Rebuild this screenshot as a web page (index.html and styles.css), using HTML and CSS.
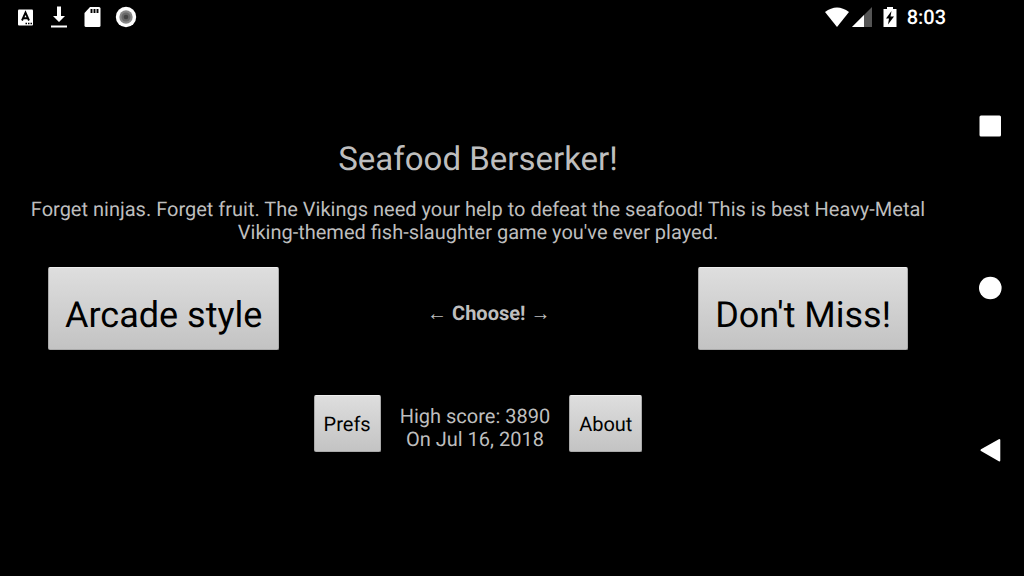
FILE: index.html
```html
<!DOCTYPE html>
<html lang="en">
<head>
<meta charset="utf-8">
<meta name="viewport" content="width=device-width, initial-scale=1">
<title>Seafood Berserker!</title>
<link rel="stylesheet" href="styles.css">
</head>
<body>
<div class="screen">
  <div class="app">
    <header class="status">
      <div class="notifications">
        <svg class="icon" viewBox="0 0 24 24" aria-hidden="true">
          <rect x="4" y="4.500" width="15" height="16" rx="1" fill="#fff"/>
          <path d="M8 15.500L11.500 7.500L15 15.500M9.300 13.300H13.700" fill="none" stroke="#000" stroke-width="1.900"/>
          <path d="M11.500 18.500H19" stroke="#000" stroke-width="1.300" stroke-dasharray="1.500 1"/>
        </svg>
        <svg class="icon" viewBox="0 0 24 24" aria-hidden="true">
          <path d="M10 1.500h4v9.500h4l-6 6-6-6h4zM4 20.500h16v2H4z" fill="#fff"/>
        </svg>
        <svg class="icon" viewBox="0 0 24 24" aria-hidden="true">
          <path d="M10 2h9a1.500 1.500 0 0 1 1.500 1.500v17a1.500 1.500 0 0 1-1.500 1.500H6a1.500 1.500 0 0 1-1.500-1.500V8z" fill="#fff"/>
          <path d="M11.500 4v4M14.500 4v4M17.500 4v4" stroke="#000" stroke-width="1.900"/>
        </svg>
        <svg class="icon" viewBox="0 0 24 24" aria-hidden="true">
          <circle cx="13" cy="12" r="10.200" fill="#fff"/>
          <circle cx="13" cy="12" r="6.700" fill="#888"/>
          <circle cx="13" cy="12" r="4.500" fill="#686868"/>
          <circle cx="13" cy="12" r="2.300" fill="#444"/>
        </svg>
      </div>
      <div class="system">
        <svg class="wifi" viewBox="0 0 26 22" aria-hidden="true">
          <path d="M1 6Q13-3 25 6L13 21z" fill="#fff"/>
        </svg>
        <svg class="signal" viewBox="0 0 20 22" aria-hidden="true">
          <path d="M20 1v20H0z" fill="#555"/>
          <path d="M12 9v12H0z" fill="#fff"/>
        </svg>
        <svg class="battery" viewBox="0 0 14 22" aria-hidden="true">
          <path d="M4 1h6v2h3.500v18H.5V3H4z" fill="#fff"/>
          <path d="M8.500 5L3 12.500h3L5 18.500 11 10.500H7.500z" fill="#000"/>
        </svg>
        <time class="clock">8:03</time>
      </div>
    </header>
    <main class="menu">
      <h1 class="title">Seafood Berserker!</h1>
      <p class="intro">Forget ninjas. Forget fruit. The Vikings need your help to defeat the seafood! This is best Heavy-Metal Viking-themed fish-slaughter game you've ever played.</p>
      <div class="modes">
        <button class="button button-large" type="button">Arcade style</button>
        <span class="choose">← Choose! →</span>
        <button class="button button-large" type="button">Don't Miss!</button>
      </div>
      <div class="footer">
        <button class="button button-small" type="button">Prefs</button>
        <p class="score">High score: 3890<br>On Jul 16, 2018</p>
        <button class="button button-small" type="button">About</button>
      </div>
    </main>
  </div>
  <nav class="navbar" aria-label="System">
    <button class="nav-button" type="button" aria-label="Overview">
      <svg class="nav-icon" viewBox="0 0 24 24"><rect x="1.500" y="1.500" width="21.500" height="21" rx="1.500" fill="#fff"/></svg>
    </button>
    <button class="nav-button" type="button" aria-label="Home">
      <svg class="nav-icon" viewBox="0 0 24 24"><circle cx="12.300" cy="12" r="11.300" fill="#fff"/></svg>
    </button>
    <button class="nav-button" type="button" aria-label="Back">
      <svg class="nav-icon" viewBox="0 0 24 24"><path d="M3.500 12.200L21.300 2v20.500z" fill="#fff" stroke="#fff" stroke-width="2" stroke-linejoin="round"/></svg>
    </button>
  </nav>
</div>
</body>
</html>
```
FILE: styles.css
```css
* {
  box-sizing: border-box;
}

body {
  margin: 0;
  background: #000;
  color: #bebebe;
  font: 20px/23px Roboto, sans-serif;
  text-rendering: geometricPrecision;
}

.screen {
  display: flex;
  min-height: 100vh;
}

.app {
  flex: 1;
  min-width: 0;
}

.status {
  display: flex;
  align-items: center;
  justify-content: space-between;
  height: 34px;
  padding: 0 10px 0 14px;
  color: #fff;
}

.notifications {
  display: flex;
  gap: 9px;
}

.icon {
  width: 24px;
  height: 24px;
}

.system {
  display: flex;
  align-items: center;
}

.wifi {
  width: 26px;
  height: 22px;
  margin-right: 2px;
}

.signal {
  width: 20px;
  height: 22px;
  margin-right: 11px;
}

.battery {
  width: 14px;
  height: 22px;
  margin-right: 10px;
}

.clock {
  padding-top: 1px;
  font-weight: 500;
}

.menu {
  padding: 106px 24px 24px;
  text-align: center;
}

.title {
  margin: 0 0 18px;
  font-size: 33px;
  font-weight: 400;
  line-height: 40px;
}

.intro {
  margin: 0;
}

.modes {
  display: flex;
  align-items: center;
  justify-content: space-between;
  margin: 23px 24px 45px;
}

.choose {
  font-weight: 700;
  padding-top: 9px;
}

.button {
  border: 1px solid #aaa;
  border-top-color: #eee;
  border-radius: 2px;
  background: linear-gradient(#dedede, #c3c3c3);
  color: #000;
  font-family: inherit;
  text-rendering: inherit;
}

.button-large {
  padding: 21px 16px 8px;
  font-size: 36px;
  line-height: 52px;
}

.button-small {
  padding: 17px 9px 16px;
  font-size: 20px;
  line-height: 22px;
}

.footer {
  display: flex;
  justify-content: center;
  gap: 19px;
}

.score {
  margin: 0;
  padding-top: 10px;
}

.navbar {
  display: flex;
  flex-direction: column;
  width: 68px;
  padding: 45px 0;
}

.nav-button {
  display: flex;
  flex: 1;
  align-items: center;
  justify-content: center;
  padding: 0;
  border: 0;
  background: none;
}

.nav-icon {
  width: 24px;
  height: 24px;
}
```
